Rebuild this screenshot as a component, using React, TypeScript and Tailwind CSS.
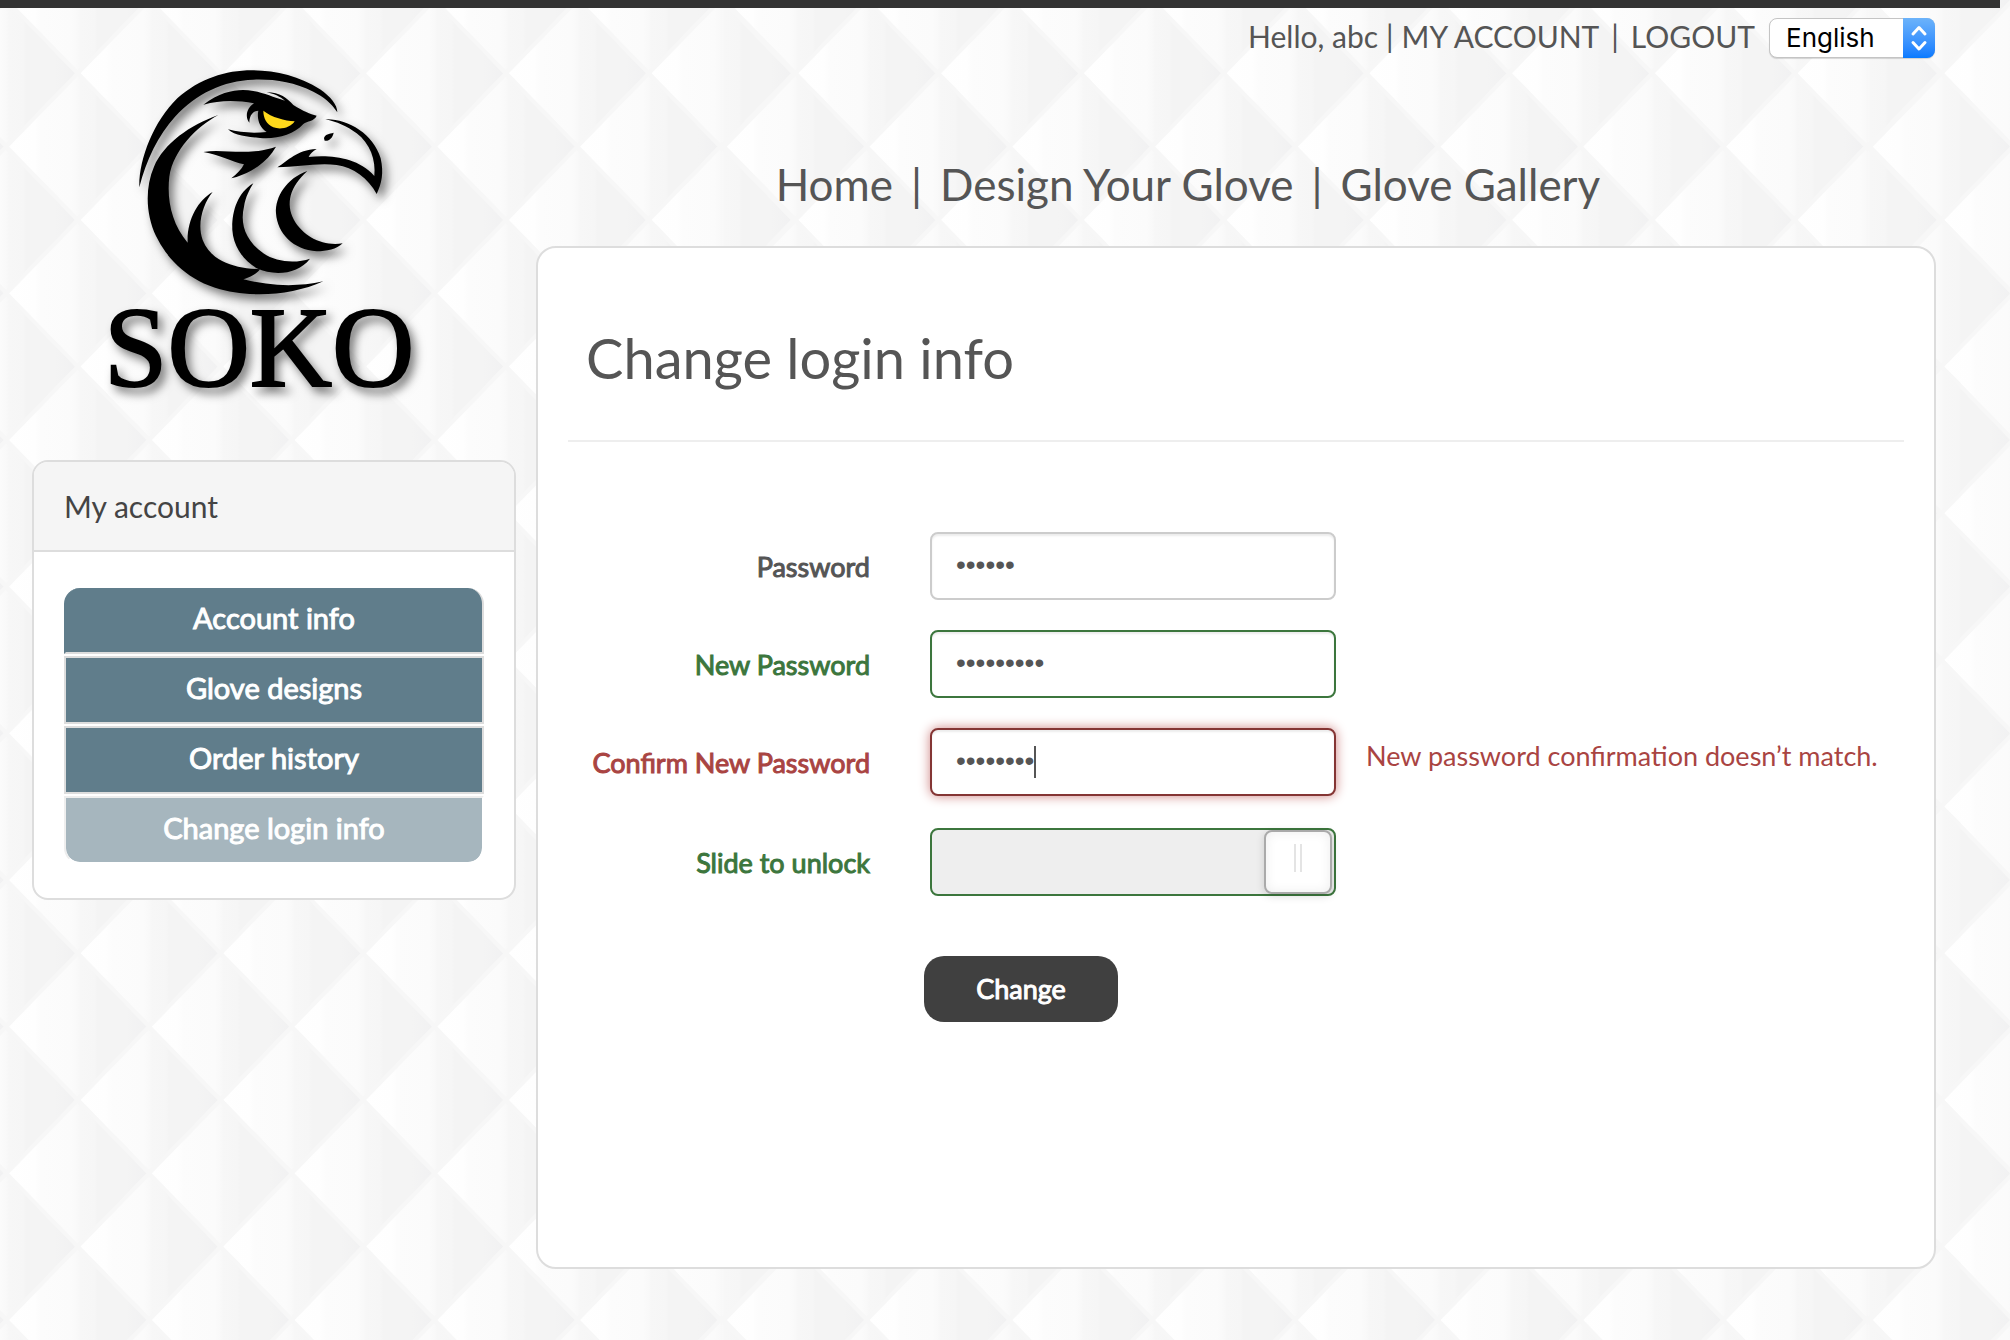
import { useState } from "react";
import type { ReactNode } from "react";

const TILE_COLUMNS = [0, 1, 2, 3, 4, 5, 6, 7];
const TILE_ROWS = [0, 1, 2, 3];
const FACET_W = 142.75;
const FACET_H = 146.67;

function QuiltedBackground() {
  return (
    <svg className="absolute inset-0 -z-10 h-full w-full" aria-hidden="true">
      <defs>
        <linearGradient id="facet" x1="0" x2="1" y1="0" y2="0">
          <stop offset="0" stopColor="#ffffff" />
          <stop offset="0.2" stopColor="#fefefe" />
          <stop offset="0.24" stopColor="#fcfcfc" />
          <stop offset="0.46" stopColor="#fbfbfb" />
          <stop offset="0.5" stopColor="#f9f9f9" />
          <stop offset="0.52" stopColor="#f7f7f7" />
          <stop offset="0.62" stopColor="#f6f6f6" />
          <stop offset="0.64" stopColor="#f4f4f4" />
          <stop offset="0.84" stopColor="#f4f4f4" />
          <stop offset="1" stopColor="#f1f1f2" />
        </linearGradient>
        <path
          id="diamond"
          d="M0 0L71.4 -73.3L142.75 0L71.4 73.3Z"
          fill="url(#facet)"
          stroke="#f7f7f7"
          strokeWidth="4"
        />
        <pattern id="quilt" x="-424" y="0" width="1146" height="440" patternUnits="userSpaceOnUse">
          <rect width="1146" height="440" fill="#f7f7f7" />
          {TILE_ROWS.map((r) =>
            TILE_COLUMNS.map((c) => (
              <g key={`${r}-${c}`}>
                <use href="#diamond" x={c * FACET_W + 2} y={r * FACET_H} />
                <use href="#diamond" x={(c + 0.5) * FACET_W + 2} y={(r + 0.5) * FACET_H} />
                {c === 0 && <use href="#diamond" x={-0.5 * FACET_W} y={(r + 0.5) * FACET_H} />}
              </g>
            )),
          )}
        </pattern>
      </defs>
      <rect width="100%" height="100%" fill="url(#quilt)" />
    </svg>
  );
}

function Logo() {
  return (
    <svg viewBox="0 0 1020 1110" className="h-[370px] w-[340px] overflow-visible" role="img" aria-label="SOKO">
      <defs>
        <filter id="logoShadow" x="-10%" y="-10%" width="125%" height="125%">
          <feDropShadow dx="14" dy="18" stdDeviation="15" floodColor="#000" floodOpacity="0.5" />
        </filter>
      </defs>
      <g filter="url(#logoShadow)">
        <path d="M148 412C146 330 190 215 262 145C330 85 410 60 490 61C560 62 630 80 690 118C722 140 742 165 742 187C725 160 700 140 670 125C610 95 550 87 490 89C400 92 320 130 255 200C205 255 168 330 148 412Z" />
        <path d="M385 195C300 225 222 280 192 350C164 415 168 495 198 558C235 635 300 692 390 718C490 745 610 735 700 694C620 712 540 708 460 688C480 682 500 672 510 658C440 655 365 638 338 570C320 520 340 460 368 426C325 450 290 510 293 578C245 520 230 450 238 380C250 300 320 230 385 195Z" />
        <path d="M490 400C440 430 425 490 427 540C430 590 460 630 500 655C555 680 625 672 660 626C620 640 560 638 520 610C465 570 450 520 462 470C467 440 478 420 490 400Z" />
        <path d="M652 363C590 385 555 440 558 490C562 550 610 600 680 604C710 604 740 598 758 580C700 590 640 560 612 510C586 460 600 410 652 363Z" />
        <path d="M340 306C400 295 470 320 558 290C530 340 480 370 424 385C440 372 455 358 462 343C425 335 390 315 340 306Z" />
        <path d="M340 164C400 120 450 116 490 123C525 129 550 142 585 152C570 140 555 132 530 127C570 127 592 145 610 165C640 184 660 192 680 197C672 215 652 212 640 222C610 255 560 268 510 264C470 260 435 258 414 238C450 248 490 250 530 246C508 232 500 205 505 182C490 182 478 195 478 218C464 200 470 175 492 160C440 150 390 150 340 164Z" />
        <path d="M520 182C545 202 585 212 614 214C602 234 570 240 550 232C530 222 520 205 520 182Z" fill="#ffd91a" />
        <path d="M706 208C770 205 850 250 872 325C882 370 875 400 860 432C835 385 790 352 740 345C680 338 620 352 562 352C595 332 620 300 680 297C668 303 660 312 656 321C720 315 800 320 853 378C858 330 840 280 800 250C770 228 740 215 706 208Z" />
        <path d="M702 265C704 252 718 252 731 248C728 264 716 275 704 272Z" />
        <text
          x="42"
          y="1007"
          fontSize="342"
          fontFamily='"Liberation Serif", serif'
          stroke="#000"
          strokeWidth="6"
        >
          SOKO
        </text>
      </g>
    </svg>
  );
}

const menu = [
  { label: "Account info", look: "mt-0.5 h-[66px] rounded-t-2xl border-t-0 border-[#ddd] border-l-[#607d8b] bg-[#607d8b]" },
  { label: "Glove designs", look: "h-[68px] border-[#ddd] bg-[#607d8b]" },
  { label: "Order history", look: "h-[68px] border-[#ddd] bg-[#607d8b]" },
  { label: "Change login info", look: "h-[68px] rounded-b-2xl border-[#eee] border-r-white border-b-white bg-[#a6b6be] bg-clip-padding" },
];

function AccountMenu() {
  return (
    <section className="overflow-hidden rounded-2xl border-2 border-[#ddd] bg-white">
      <h2 className="border-b-2 border-[#ddd] bg-[#f5f5f5] px-[30px] py-6 text-[30px] leading-10 text-[#444]">
        My account
      </h2>
      <nav className="flex flex-col gap-0.5 px-[30px] py-[34px]">
        {menu.map((item) => (
          <a
            key={item.label}
            href="#"
            className={`flex items-center justify-center border-2 pb-1 text-[29px] text-white [-webkit-text-stroke:1px] ${item.look}`}
          >
            {item.label}
          </a>
        ))}
      </nav>
    </section>
  );
}

function Row({ id, label, tone, children }: { id: string; label: string; tone: string; children: ReactNode }) {
  return (
    <div className="flex items-center">
      <label
        htmlFor={id}
        className={`mr-15 w-[302px] shrink-0 pt-0.5 text-right text-[27px] [-webkit-text-stroke:1px] ${tone}`}
      >
        {label}
      </label>
      {children}
    </div>
  );
}

const field =
  "block h-[68px] w-[406px] shrink-0 rounded-lg border-2 bg-white px-6 pb-0.5 font-['Liberation_Sans',sans-serif] text-[28px] text-[#555] outline-none";

export default function App() {
  const [current, setCurrent] = useState("abc123");
  const [next, setNext] = useState("abcdef123");
  const [confirm, setConfirm] = useState("abcdef12");
  const [slide, setSlide] = useState(100);

  return (
    <div className="relative isolate min-h-screen bg-[#f7f7f7] font-['Lato',sans-serif] text-[#555]">
      <QuiltedBackground />
      <div className="mr-2.5 h-2 bg-[#333]" />
      <div className="flex gap-5 pr-[74px] pb-15 pl-8">
        <aside className="w-[484px] shrink-0">
          <a href="#" className="mt-[42px] mb-10 ml-[58px] block w-[340px]">
            <Logo />
          </a>
          <AccountMenu />
        </aside>

        <main className="min-w-0 flex-1">
          <div className="flex items-center justify-end pt-2 text-[30px] leading-10">
            <div className="flex pb-1">
              <span>Hello, abc</span>
              <span className="mx-2">|</span>
              <a href="#">MY ACCOUNT</a>
              <span className="mx-3">|</span>
              <a href="#">LOGOUT</a>
            </div>
            <div className="relative mr-px ml-3.5">
              <select
                aria-label="Language"
                className="block h-10 w-[166px] appearance-none rounded-lg border border-[#c4c4c4] bg-white pl-4 font-['Inter',sans-serif] text-[26px] leading-9 text-black shadow-[0_1px_1px_rgba(0,0,0,0.15)]"
              >
                <option>English</option>
              </select>
              <div className="pointer-events-none absolute inset-y-0 right-0 flex w-8 items-center justify-center rounded-r-lg bg-linear-to-b from-[#6cb3fa] to-[#067aff]">
                <svg
                  viewBox="0 0 32 40"
                  className="h-10 w-8"
                  fill="none"
                  stroke="#fff"
                  strokeWidth="3"
                  strokeLinecap="round"
                  strokeLinejoin="round"
                >
                  <path d="M10 16L16 9.500L22 16M10 24.500L16 31L22 24.500" />
                </svg>
              </div>
            </div>
          </div>

          <nav className="mt-24 mb-[34px] flex justify-center pr-24 text-[44px] leading-14">
            <a href="#">Home</a>
            <span className="mx-[18px]">|</span>
            <a href="#">Design Your Glove</a>
            <span className="mx-[18px]">|</span>
            <a href="#">Glove Gallery</a>
          </nav>

          <section className="min-h-[1023px] rounded-[20px] border-2 border-[#ddd] bg-white px-[30px]">
            <h1 className="border-b-2 border-[#eee] pt-[72px] pb-11 pl-[18px] text-[56px] leading-[76px]">
              Change login info
            </h1>
            <form className="pt-[90px]" onSubmit={(e) => e.preventDefault()}>
              <div className="flex flex-col gap-[30px]">
                <Row id="current" label="Password" tone="text-[#555]">
                  <input
                    id="current"
                    type="password"
                    value={current}
                    onChange={(e) => setCurrent(e.target.value)}
                    className={`${field} border-[#ccc] shadow-[inset_0_2px_2px_rgba(0,0,0,0.075)]`}
                  />
                </Row>
                <Row id="next" label="New Password" tone="text-[#3c763d]">
                  <input
                    id="next"
                    type="password"
                    value={next}
                    onChange={(e) => setNext(e.target.value)}
                    className={`${field} border-[#3c763d] shadow-[inset_0_2px_2px_rgba(0,0,0,0.075)]`}
                  />
                </Row>
                <Row id="confirm" label="Confirm New Password" tone="text-[#a94442]">
                  <div className="relative shrink-0">
                    <input
                      id="confirm"
                      type="password"
                      autoFocus
                      value={confirm}
                      onChange={(e) => setConfirm(e.target.value)}
                      className={`${field} border-[#843534] caret-transparent shadow-[inset_0_2px_2px_rgba(0,0,0,0.075),0_0_12px_#ce8483]`}
                    />
                    <span className="pointer-events-none absolute top-[18px] left-[104px] h-8 w-0.5 bg-[#555]" />
                  </div>
                  <p className="ml-[30px] pb-3 text-[27px] whitespace-nowrap text-[#a94442]">
                    New password confirmation doesn’t match.
                  </p>
                </Row>
                <div className="mt-0.5">
                  <Row id="unlock" label="Slide to unlock" tone="text-[#3c763d]">
                    <input
                      id="unlock"
                      type="range"
                      value={slide}
                      onChange={(e) => setSlide(Number(e.target.value))}
                      className="h-[68px] w-[406px] appearance-none rounded-lg border-2 border-[#3c763d] bg-[#eee] pr-0.5 [&::-webkit-slider-thumb]:h-16 [&::-webkit-slider-thumb]:w-[68px] [&::-webkit-slider-thumb]:appearance-none [&::-webkit-slider-thumb]:rounded-lg [&::-webkit-slider-thumb]:border-2 [&::-webkit-slider-thumb]:border-[#aaa] [&::-webkit-slider-thumb]:bg-white [&::-webkit-slider-thumb]:bg-[linear-gradient(90deg,#e4e4e4_2px,transparent_2px,transparent_6px,#e4e4e4_6px)] [&::-webkit-slider-thumb]:bg-[length:8px_28px] [&::-webkit-slider-thumb]:bg-[position:center_12px] [&::-webkit-slider-thumb]:bg-no-repeat [&::-webkit-slider-thumb]:shadow-[inset_0_0_12px_#eee,0_2px_8px_rgba(0,0,0,0.15)]"
                    />
                  </Row>
                </div>
              </div>
              <button
                type="submit"
                className="mt-15 ml-[356px] h-[66px] w-[194px] rounded-[20px] bg-[#404040] text-[27px] text-white [-webkit-text-stroke:1px]"
              >
                Change
              </button>
            </form>
          </section>
        </main>
      </div>
    </div>
  );
}
